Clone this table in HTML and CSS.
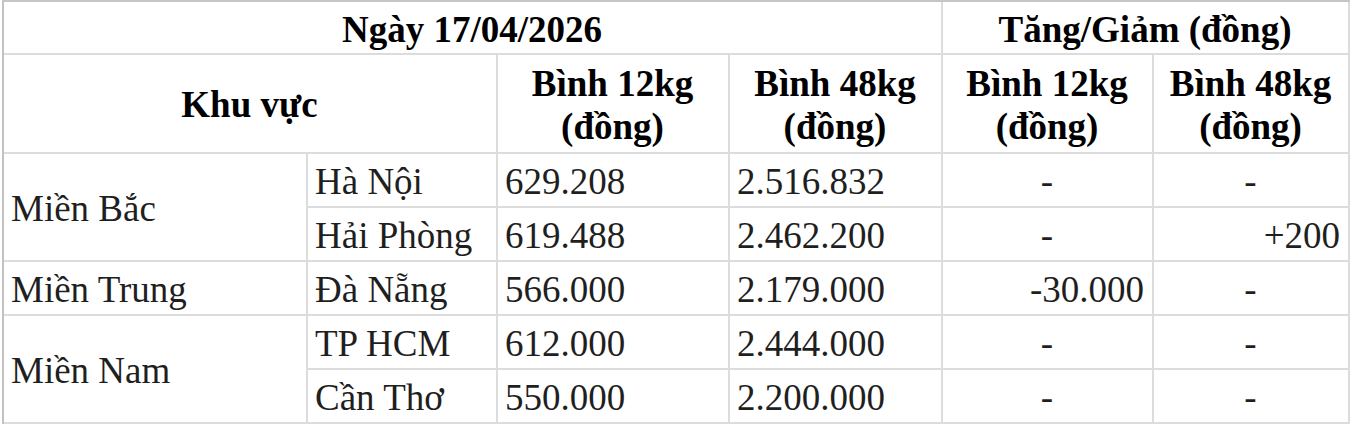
FILE: index.html
```html
<!DOCTYPE html>
<html lang="vi">
<head>
<meta charset="utf-8">
<title>Giá gas</title>
<link rel="stylesheet" href="styles.css">
</head>
<body>
<table class="price-table">
  <colgroup>
    <col class="c-region">
    <col class="c-city">
    <col class="c-p12">
    <col class="c-p48">
    <col class="c-d12">
    <col class="c-d48">
  </colgroup>
  <thead>
    <tr class="row-top">
      <th colspan="4">Ngày 17/04/2026</th>
      <th colspan="2">Tăng/Giảm (đồng)</th>
    </tr>
    <tr class="row-sub">
      <th colspan="2">Khu vực</th>
      <th>Bình 12kg<br>(đồng)</th>
      <th>Bình 48kg<br>(đồng)</th>
      <th>Bình 12kg<br>(đồng)</th>
      <th>Bình 48kg<br>(đồng)</th>
    </tr>
  </thead>
  <tbody>
    <tr class="row-data">
      <td rowspan="2">Miền Bắc</td>
      <td>Hà Nội</td>
      <td>629.208</td>
      <td>2.516.832</td>
      <td class="mid">-</td>
      <td class="mid">-</td>
    </tr>
    <tr class="row-data">
      <td>Hải Phòng</td>
      <td>619.488</td>
      <td>2.462.200</td>
      <td class="mid">-</td>
      <td class="num">+200</td>
    </tr>
    <tr class="row-data">
      <td>Miền Trung</td>
      <td>Đà Nẵng</td>
      <td>566.000</td>
      <td>2.179.000</td>
      <td class="num">-30.000</td>
      <td class="mid">-</td>
    </tr>
    <tr class="row-data">
      <td rowspan="2">Miền Nam</td>
      <td>TP HCM</td>
      <td>612.000</td>
      <td>2.444.000</td>
      <td class="mid">-</td>
      <td class="mid">-</td>
    </tr>
    <tr class="row-data">
      <td>Cần Thơ</td>
      <td>550.000</td>
      <td>2.200.000</td>
      <td class="mid">-</td>
      <td class="mid">-</td>
    </tr>
  </tbody>
</table>
</body>
</html>
```

FILE: styles.css
```css
html, body {
  margin: 0;
  padding: 0;
  background: #ffffff;
}

body {
  padding-left: 2px;
  font-family: "Liberation Serif", "Times New Roman", serif;
  font-size: 37px;
  color: #1f1f1f;
}

.price-table {
  table-layout: fixed;
  width: 1348px;
  border-collapse: separate;
  border-spacing: 0;
  border-top: 2px solid #c6c6c6;
  border-left: 2px solid #c2c2c2;
}

.c-region { width: 304px; }
.c-city { width: 190px; }
.c-p12 { width: 232px; }
.c-p48 { width: 213px; }
.c-d12 { width: 211px; }
.c-d48 { width: 196px; }

.price-table th,
.price-table td {
  border-right: 2px solid #dcdcdc;
  border-bottom: 2px solid #dcdcdc;
  padding: 4px 8px 0 7px;
  vertical-align: middle;
  line-height: 1.15;
  white-space: nowrap;
}

.price-table th {
  font-weight: bold;
  color: #000000;
  text-align: center;
}

.price-table td {
  text-align: left;
}

.price-table td.mid {
  text-align: center;
}

.price-table td.num {
  text-align: right;
}

.row-top { height: 53px; }
.row-top th { padding-top: 5px; }
.row-sub { height: 99px; }
.row-data { height: 54px; }
```
